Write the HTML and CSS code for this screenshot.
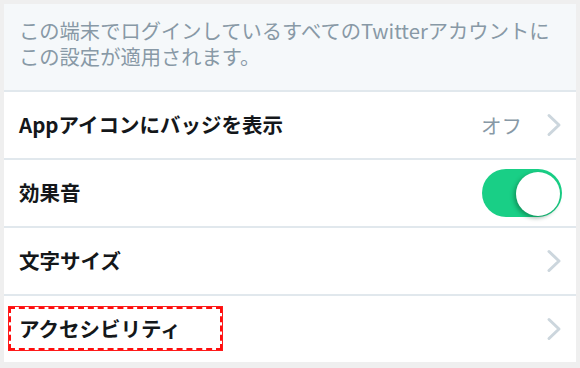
FILE: index.html
```html
<!DOCTYPE html>
<html lang="ja">
<head>
<meta charset="utf-8">
<link rel="stylesheet" href="styles.css">
</head>
<body>
<div class="panel">
  <div class="note">この端末でログインしているすべてのTwitterアカウントにこの設定が適用されます。</div>
  <div class="row">
    <span class="label">Appアイコンにバッジを表示</span>
    <span class="right"><span class="value">オフ</span><svg class="chev" viewBox="0 0 16 24" width="16" height="24"><path d="M3 2.5 L13 12 L3 21.5" fill="none" stroke="#ccd6dd" stroke-width="3" stroke-linecap="round" stroke-linejoin="round"/></svg></span>
  </div>
  <div class="row">
    <span class="label">効果音</span>
    <span class="toggle"><span class="knob"></span></span>
  </div>
  <div class="row">
    <span class="label">文字サイズ</span>
    <svg class="chev" viewBox="0 0 16 24" width="16" height="24"><path d="M3 2.5 L13 12 L3 21.5" fill="none" stroke="#ccd6dd" stroke-width="3" stroke-linecap="round" stroke-linejoin="round"/></svg>
  </div>
  <div class="row">
    <span class="label highlight">アクセシビリティ</span>
    <svg class="chev" viewBox="0 0 16 24" width="16" height="24"><path d="M3 2.5 L13 12 L3 21.5" fill="none" stroke="#ccd6dd" stroke-width="3" stroke-linecap="round" stroke-linejoin="round"/></svg>
  </div>
</div>
</body>
</html>
```

FILE: styles.css
```css
html, body {
  margin: 0;
  padding: 0;
}
body {
  background: #efefef;
  width: 580px;
  height: 368px;
  overflow: hidden;
  font-family: "Noto Sans CJK JP", "Noto Sans", sans-serif;
}
.panel {
  margin: 4px 4px 0 4px;
  width: 572px;
  background: #ffffff;
}
.note {
  background: #f5f8fa;
  height: 86px;
  box-sizing: border-box;
  padding: 13px 20px 0 15px;
  font-size: 20.3px;
  line-height: 26px;
  color: #8899a6;
}
.row {
  height: 68px;
  box-sizing: border-box;
  border-top: 2px solid #e1e8ed;
  display: flex;
  align-items: center;
  justify-content: space-between;
  padding: 0 15px 3px 15px;
}
.label {
  font-size: 20.5px;
  font-weight: bold;
  color: #14171a;
  position: relative;
}
.highlight::after {
  content: "";
  position: absolute;
  left: -10px;
  right: -41px;
  top: -6px;
  bottom: -7px;
  border: 2px dashed #ff0d0d;
  box-shadow: 0 0 0 1px #ff1a1a;
}
.right {
  display: flex;
  align-items: center;
  gap: 24px;
  margin-top: 3px;
}
.value {
  font-size: 20.5px;
  color: #8899a6;
}
.chev {
  display: block;
  margin-right: -1px;
}
.row > .chev {
  margin-top: 3px;
}
.toggle {
  width: 80px;
  height: 48px;
  border-radius: 24px;
  background: #19cf86;
  position: relative;
  margin-right: -1px;
  margin-top: 3px;
}
.knob {
  position: absolute;
  right: 2px;
  top: 3px;
  width: 44px;
  height: 44px;
  border-radius: 50%;
  background: #ffffff;
  box-shadow: -2px 2px 4px rgba(0, 60, 30, 0.4);
}
```
